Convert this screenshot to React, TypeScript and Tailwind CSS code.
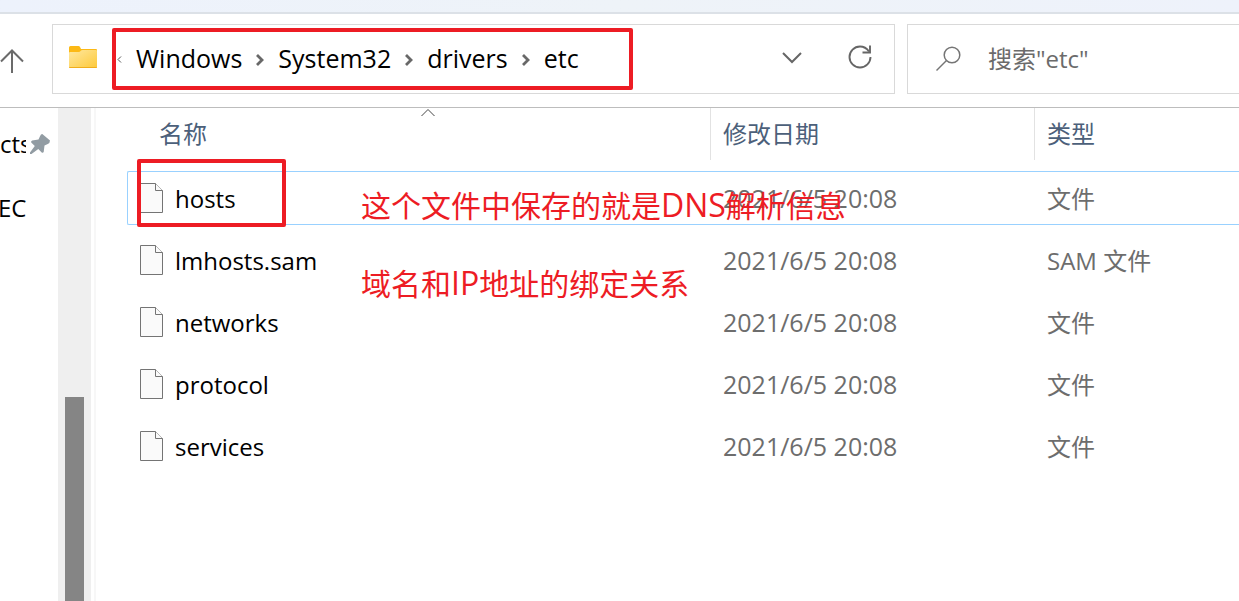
import React from "react";

type FileEntry = { name: string; modified: string; type: string };

const crumbs = ["Windows", "System32", "drivers", "etc"];

const files: FileEntry[] = [
  { name: "hosts", modified: "2021/6/5 20:08", type: "文件" },
  { name: "lmhosts.sam", modified: "2021/6/5 20:08", type: "SAM 文件" },
  { name: "networks", modified: "2021/6/5 20:08", type: "文件" },
  { name: "protocol", modified: "2021/6/5 20:08", type: "文件" },
  { name: "services", modified: "2021/6/5 20:08", type: "文件" },
];

function UpArrow() {
  return (
    <svg width="24" height="24" viewBox="0 0 24 24" fill="none" stroke="#6b6b6b" strokeWidth="2">
      <path d="M1 12.5 12 1.5 23 12.5M12 2v22" />
    </svg>
  );
}

function FolderIcon() {
  return (
    <svg className="mb-1" width="28" height="22" viewBox="0 0 28 22">
      <defs>
        <linearGradient id="folder" x1="0" y1="0" x2="1" y2="1">
          <stop offset="0" stopColor="#ffe8a0" />
          <stop offset="1" stopColor="#fdc93a" />
        </linearGradient>
      </defs>
      <path d="M0 1.5Q0 0 1.500 0H9.500Q10.500 0 11 1L12 3H27Q28 3 28 4V12H0Z" fill="#fcb915" />
      <path d="M0 7Q0 6 1 6H9.500Q11 6 12 4.500Q12.500 4 13.500 4H27Q28 4 28 5V21Q28 22 27 22H1Q0 22 0 21Z" fill="url(#folder)" />
      <path d="M0 21H28Q28 22 27 22H1Q0 22 0 21Z" fill="#f0ad1c" />
    </svg>
  );
}

function CrumbChevron() {
  return (
    <svg className="mx-[14px] mt-1" width="8" height="12" viewBox="0 0 8 12" fill="none" stroke="#686868" strokeWidth="2.800">
      <path d="M1 1 6 6 1 11" />
    </svg>
  );
}

function RefreshIcon() {
  return (
    <svg width="24" height="24" viewBox="0 0 24 24" fill="none" stroke="#666" strokeWidth="1.900">
      <path d="M22.500 12A10.500 10.500 0 1 1 12 1.500Q17.500 1.500 21 6.500" />
      <path d="M22 0.500V7.500H14.500" />
    </svg>
  );
}

function SearchIcon() {
  return (
    <svg width="26" height="26" viewBox="0 0 26 26" fill="none" stroke="#757575" strokeWidth="1.500">
      <circle cx="16" cy="9" r="7.800" />
      <path d="M10.500 14.500.5 24.500" />
    </svg>
  );
}

function PinIcon() {
  return (
    <svg width="20" height="20" viewBox="0 0 20 20" fill="#929ca3">
      <path d="M12.300 0 20 6.500Q20 9 17.800 10L14.500 11.500 13.700 18Q13 19.200 11.700 18.500L8.300 15 1.500 20H0V18.500L4.800 12 1.200 8.500Q.700 7 2.200 6.500L8.500 5.500 10 2.300Q10.800 0 12.300 0Z" />
    </svg>
  );
}

function FileIcon() {
  return (
    <svg width="23" height="30" viewBox="0 0 23 30" fill="#fafafa" stroke="#747474">
      <path d="M.5.5H15.500L22.500 7.500V29.500H.5Z" />
      <path d="M15.500.5V7.500H22.500" />
    </svg>
  );
}

export default function App() {
  return (
    <div className="flex min-h-screen flex-col overflow-hidden bg-white font-['Open_Sans','Noto_Sans_CJK_SC',sans-serif] text-2xl leading-8 text-black">
      <div className="h-[14px] border-b-2 border-[#dce1e7] bg-linear-to-r from-[#edf2fc] via-[#eef3f8] to-[#eef2fb]" />

      <header className="flex h-[94px] gap-3 border-b border-[#bdbdbd] pt-[10px] pb-[13px]">
        <button aria-label="上移" className="flex w-10 items-center pt-1">
          <UpArrow />
        </button>
        <div className="relative flex flex-1 items-center border border-[#d9d9d9] px-4">
          <FolderIcon />
          <svg className="ml-5" width="5" height="7" viewBox="0 0 5 7" fill="none" stroke="#555">
            <path d="M4 .5 1 3.500 4 6.500" />
          </svg>
          <nav aria-label="路径" className="mb-0.5 ml-[14px] flex items-center text-[25px]">
            {crumbs.map((crumb, i) => (
              <React.Fragment key={crumb}>
                {i > 0 && <CrumbChevron />}
                <a href={"#" + crumb}>{crumb}</a>
              </React.Fragment>
            ))}
          </nav>
          <button aria-label="展开" className="mb-0.5 ml-auto">
            <svg width="20" height="12" viewBox="0 0 20 12" fill="none" stroke="#666" strokeWidth="2">
              <path d="M1 1 10 10 19 1" />
            </svg>
          </button>
          <button aria-label="刷新" className="mr-[6px] mb-1 ml-[46px]">
            <RefreshIcon />
          </button>
          <div className="pointer-events-none absolute top-[3px] left-[59px] h-[62px] w-[521px] rounded-xs border-4 border-[#ed1c24]" />
        </div>
        <label className="flex w-[332px] items-center gap-[26px] border-y border-l border-[#d9d9d9] pl-7">
          <SearchIcon />
          <input
            type="search"
            aria-label="搜索"
            placeholder={'搜索"etc"'}
            className="min-w-0 flex-1 outline-none placeholder:text-[#6b6b6b]"
          />
        </label>
      </header>

      <div className="flex flex-1">
        <aside className="flex w-[58px] flex-col gap-8 pt-5">
          <div className="flex items-center gap-1">
            <span className="w-[26px] overflow-hidden">cts</span>
            <PinIcon />
          </div>
          <span className="-ml-0.5">EC</span>
        </aside>
        <div className="flex w-[33px] flex-col bg-[#efefef] pl-[7px]">
          <div className="mt-[289px] w-[19px] flex-1 bg-[#858585]" />
        </div>
        <div className="ml-[3px] w-[2px] bg-[#f7f7f7]" />

        <main className="relative ml-[31px] flex-1">
          <table className="w-full table-fixed border-collapse text-left">
            <colgroup>
              <col className="w-[583px]" />
              <col className="w-[324px]" />
              <col />
            </colgroup>
            <thead>
              <tr className="h-[59px] align-top text-[#4c607a]">
                <th className="relative p-0 font-normal">
                  <div className="h-[52px] pt-[10px] pl-8">名称</div>
                  <svg className="absolute top-0 left-[294px]" width="14" height="9" viewBox="0 0 14 9" fill="none" stroke="#444">
                    <path d="M.5 8 7 1.500 13.500 8" />
                  </svg>
                </th>
                <th className="p-0 font-normal">
                  <div className="h-[52px] border-l border-[#e2e2e2] pt-[10px] pl-3">修改日期</div>
                </th>
                <th className="p-0 font-normal">
                  <div className="h-[52px] border-l border-[#e2e2e2] pt-[10px] pl-3">类型</div>
                </th>
              </tr>
            </thead>
            <tbody>
              {files.map((file, i) => {
                const line = i === 0 ? "border-[#99d1ff]" : "border-transparent";
                return (
                  <tr key={file.name} className="h-[62px] text-[#6d6d6d]">
                    <td className="relative p-0">
                      <div className={`flex h-[54px] items-center gap-3 rounded-l-xs border-y border-l pl-3 text-black ${line}`}>
                        <FileIcon />
                        <span className="pt-0.5">{file.name}</span>
                      </div>
                      {i === 0 && (
                        <div className="pointer-events-none absolute -top-2 left-[10px] h-[68px] w-[149px] rounded-xs border-4 border-[#ed1c24]" />
                      )}
                    </td>
                    <td className="p-0">
                      <div className={`flex h-[54px] items-center border-y pl-[13px] text-[25px] ${line}`}>{file.modified}</div>
                    </td>
                    <td className="p-0">
                      <div className={`flex h-[54px] items-center border-y pt-0.5 pl-[13px] ${line}`}>{file.type}</div>
                    </td>
                  </tr>
                );
              })}
            </tbody>
          </table>
          <p className="pointer-events-none absolute top-[77px] left-[234px] text-[30px] leading-10 whitespace-nowrap text-[#ed1c24]">
            这个文件中保存的就是<span className="text-[32px]">DNS</span>解析信息
          </p>
          <p className="pointer-events-none absolute top-[155px] left-[234px] text-[30px] leading-10 whitespace-nowrap text-[#ed1c24]">
            域名和<span className="text-[32px]">IP</span>地址的绑定关系
          </p>
        </main>
      </div>
    </div>
  );
}
